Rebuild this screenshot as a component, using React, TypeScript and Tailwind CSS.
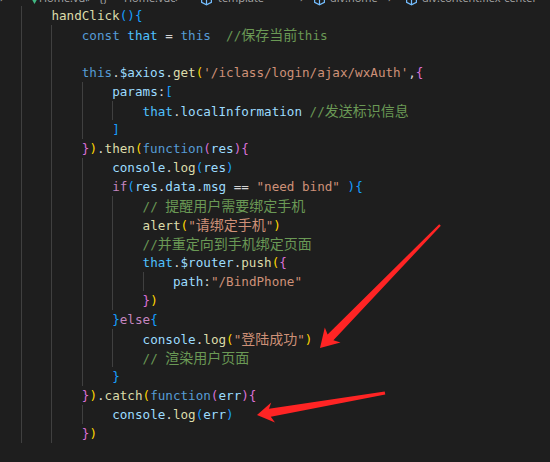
import React from 'react';

type Tok = [string, string];

const COLORS: Record<string, string> = {
    t: 'text-[#d4d4d4]',
    k: 'text-[#569cd6]',
    v: 'text-[#9cdcfe]',
    cv: 'text-[#4fc1ff]',
    f: 'text-[#dcdcaa]',
    s: 'text-[#ce9178]',
    c: 'text-[#6a9955]',
    p: 'text-[#c586c0]',
    b1: 'text-[#ffd700]',
    b2: 'text-[#da70d6]',
    b3: 'text-[#179fff]',
};

const lines: { ind: number; toks: Tok[] }[] = [
    { ind: 1, toks: [['f', 'handClick'], ['b3', '()'], ['b3', '{']] },
    { ind: 2, toks: [['k', 'const'], ['t', ' '], ['cv', 'that'], ['t', ' = '], ['k', 'this'], ['t', '  '], ['c', '//保存当前this']] },
    { ind: 2, toks: [] },
    { ind: 2, toks: [['k', 'this'], ['t', '.'], ['v', '$axios'], ['t', '.'], ['f', 'get'], ['b1', '('], ['s', "'/iclass/login/ajax/wxAuth'"], ['t', ','], ['b2', '{']] },
    { ind: 3, toks: [['v', 'params'], ['t', ':'], ['b3', '[']] },
    { ind: 4, toks: [['cv', 'that'], ['t', '.'], ['v', 'localInformation'], ['t', ' '], ['c', '//发送标识信息']] },
    { ind: 3, toks: [['b3', ']']] },
    { ind: 2, toks: [['b2', '}'], ['b1', ')'], ['t', '.'], ['f', 'then'], ['b1', '('], ['k', 'function'], ['b2', '('], ['v', 'res'], ['b2', ')'], ['b2', '{']] },
    { ind: 3, toks: [['v', 'console'], ['t', '.'], ['f', 'log'], ['b3', '('], ['v', 'res'], ['b3', ')']] },
    { ind: 3, toks: [['p', 'if'], ['b3', '('], ['v', 'res'], ['t', '.'], ['v', 'data'], ['t', '.'], ['v', 'msg'], ['t', ' == '], ['s', '"need bind"'], ['t', ' '], ['b3', ')'], ['b3', '{']] },
    { ind: 4, toks: [['c', '// 提醒用户需要绑定手机']] },
    { ind: 4, toks: [['f', 'alert'], ['b1', '('], ['s', '"请绑定手机"'], ['b1', ')']] },
    { ind: 4, toks: [['c', '//并重定向到手机绑定页面']] },
    { ind: 4, toks: [['cv', 'that'], ['t', '.'], ['v', '$router'], ['t', '.'], ['f', 'push'], ['b1', '('], ['b2', '{']] },
    { ind: 5, toks: [['v', 'path'], ['t', ':'], ['s', '"/BindPhone"']] },
    { ind: 4, toks: [['b2', '}'], ['b1', ')']] },
    { ind: 3, toks: [['b3', '}'], ['p', 'else'], ['b3', '{']] },
    { ind: 4, toks: [['v', 'console'], ['t', '.'], ['f', 'log'], ['b1', '('], ['s', '"登陆成功"'], ['b1', ')']] },
    { ind: 4, toks: [['c', '// 渲染用户页面']] },
    { ind: 3, toks: [['b3', '}']] },
    { ind: 2, toks: [['b2', '}'], ['b1', ')'], ['t', '.'], ['f', 'catch'], ['b1', '('], ['k', 'function'], ['b2', '('], ['v', 'err'], ['b2', ')'], ['b2', '{']] },
    { ind: 3, toks: [['v', 'console'], ['t', '.'], ['f', 'log'], ['b3', '('], ['v', 'err'], ['b3', ')']] },
    { ind: 2, toks: [['b2', '}'], ['b1', ')']] },
];

function renderText(text: string) {
    return text.split(/([\u3000-\u9fff\uff00-\uffef]+)/).map((part, i) =>
        /[\u3000-\u9fff\uff00-\uffef]/.test(part) ? (
            <span key={i} className="text-[14px] font-['Noto_Sans_CJK_SC',sans-serif]">{part}</span>
        ) : (
            <React.Fragment key={i}>{part}</React.Fragment>
        )
    );
}

function CodeLine({ ind, toks }: { ind: number; toks: Tok[] }) {
    return (
        <div className="flex h-[19px] leading-[19px] whitespace-pre">
            {Array.from({ length: ind }).map((_, i) => (
                <span key={i} className="w-[30.4px] h-full shrink-0 border-l border-[#404040]" />
            ))}
            <span>
                {toks.map(([type, text], i) => (
                    <span key={i} className={COLORS[type]}>{renderText(text)}</span>
                ))}
            </span>
        </div>
    );
}

function SymbolIcon() {
    return (
        <svg width="13" height="13" viewBox="0 0 16 16" className="inline-block">
            <path d="M8 1.5 L14 4.5 V11.5 L8 14.5 L2 11.5 V4.5 Z" fill="none" stroke="#75beff" strokeWidth="1.5" />
            <path d="M2 4.5 L8 7.5 L14 4.5 M8 7.5 V14.5" fill="none" stroke="#75beff" strokeWidth="1.5" />
        </svg>
    );
}

function Breadcrumbs() {
    const item = 'shrink-0 overflow-hidden';
    return (
        <div className="flex h-[18px] -mt-[12px] pt-[3px] items-start text-[11px] leading-[13px] text-[#a9a9a9] font-['Open_Sans',sans-serif] whitespace-nowrap overflow-hidden">
            <span className={`${item} w-[30px]`}>›</span>
            <span className={`${item} w-[9px]`}>
                <svg width="9" height="13" viewBox="0 0 9 13"><path d="M0 5 L4.5 13 L9 5 Z" fill="#41b883" /></svg>
            </span>
            <span className={`${item} w-[48px]`}>Home.vue</span>
            <span className={`${item} w-[12px]`}>›</span>
            <span className={`${item} w-[25px]`}>{'{}'}</span>
            <span className={`${item} w-[51px]`}>Home.vue</span>
            <span className={`${item} w-[25px]`}>›</span>
            <span className={`${item} w-[18px]`}><SymbolIcon /></span>
            <span className={`${item} w-[82px]`}>template</span>
            <span className={`${item} w-[13px]`}>›</span>
            <span className={`${item} w-[17px]`}><SymbolIcon /></span>
            <span className={`${item} w-[58px]`}>div.home</span>
            <span className={`${item} w-[17px]`}>›</span>
            <span className={`${item} w-[17px]`}><SymbolIcon /></span>
            <span className="shrink-0">div.content.flex-center</span>
        </div>
    );
}

function Arrows() {
    return (
        <svg className="absolute inset-0 pointer-events-none" width="550" height="462" viewBox="0 0 550 462">
            <polygon
                fill="#ff2424"
                points="320,348 340.5,342.6 333.4,340.2 440.8,225.8 439.2,224.2 327.6,334.4 324.8,327.4"
            />
            <polygon
                fill="#ff2424"
                points="257,415 275,422.4 270.8,416.8 385.3,394.4 384.7,391.6 269,408.8 271.2,402.4"
            />
        </svg>
    );
}

export default function App() {
    return (
        <div className="relative w-[550px] h-[462px] overflow-hidden bg-[#1e1e1e]">
            <Breadcrumbs />
            <div className="pl-[21px] text-[12.62px] font-['DejaVu_Sans_Mono','Noto_Sans_CJK_SC',monospace]">
                {lines.map((l, i) => (
                    <CodeLine key={i} ind={l.ind} toks={l.toks} />
                ))}
            </div>
            <Arrows />
        </div>
    );
}
